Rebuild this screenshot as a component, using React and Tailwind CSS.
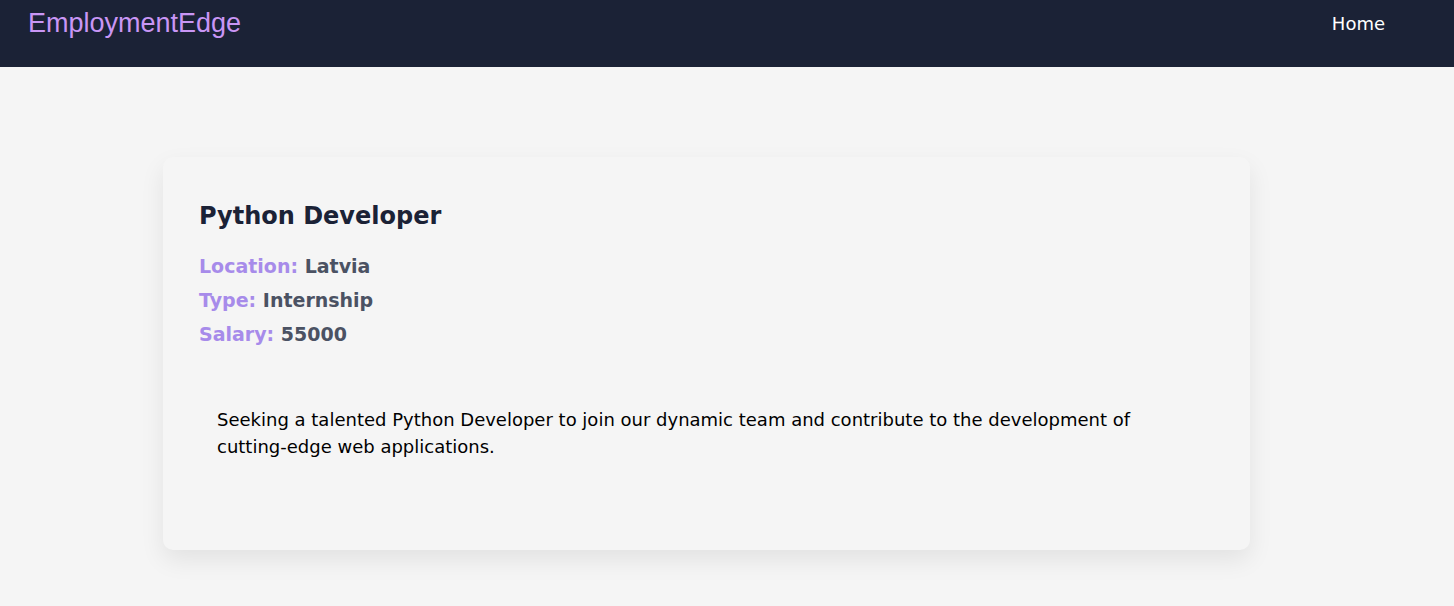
import React from 'react';

const job = {
  title: 'Python Developer',
  location: 'Latvia',
  type: 'Internship',
  salary: '55000',
  description:
    'Seeking a talented Python Developer to join our dynamic team and contribute to the development of cutting-edge web applications.',
};

const Field = ({ label, value }) => (
  <p className="text-[19px] leading-[34px] font-semibold">
    <span className="text-[#a78bea]">{label}:</span>{' '}
    <span className="text-[#4b5263]">{value}</span>
  </p>
);

export default function App() {
  return (
    <div className="min-h-screen bg-[#f5f5f5] font-['DejaVu_Sans',sans-serif]">
      <nav className="h-[67px] bg-[#1b2236] flex items-start justify-between pl-[28px] pr-[69px]">
        <a className="mt-[3px] text-[27px] text-[#c996f5] font-['Liberation_Sans',Arial,sans-serif]">
          EmploymentEdge
        </a>
        <a className="mt-[10px] text-[18px] text-white">Home</a>
      </nav>

      <main className="pt-[90px] pb-[56px]">
        <div className="ml-[163px] w-[1087px] h-[393px] rounded-[10px] bg-[#f5f5f5] shadow-[0_10px_25px_rgba(0,0,0,0.08)] px-[36px] pt-[40px]">
          <h1 className="text-[24px] font-semibold text-[#1b2236] leading-[38px]">{job.title}</h1>
          <div className="mt-[14px]">
            <Field label="Location" value={job.location} />
            <Field label="Type" value={job.type} />
            <Field label="Salary" value={job.salary} />
          </div>
          <p className="mt-[55px] px-[18px] text-[18px] leading-[27px] text-black max-w-[960px]">
            {job.description}
          </p>
        </div>
      </main>
    </div>
  );
}
